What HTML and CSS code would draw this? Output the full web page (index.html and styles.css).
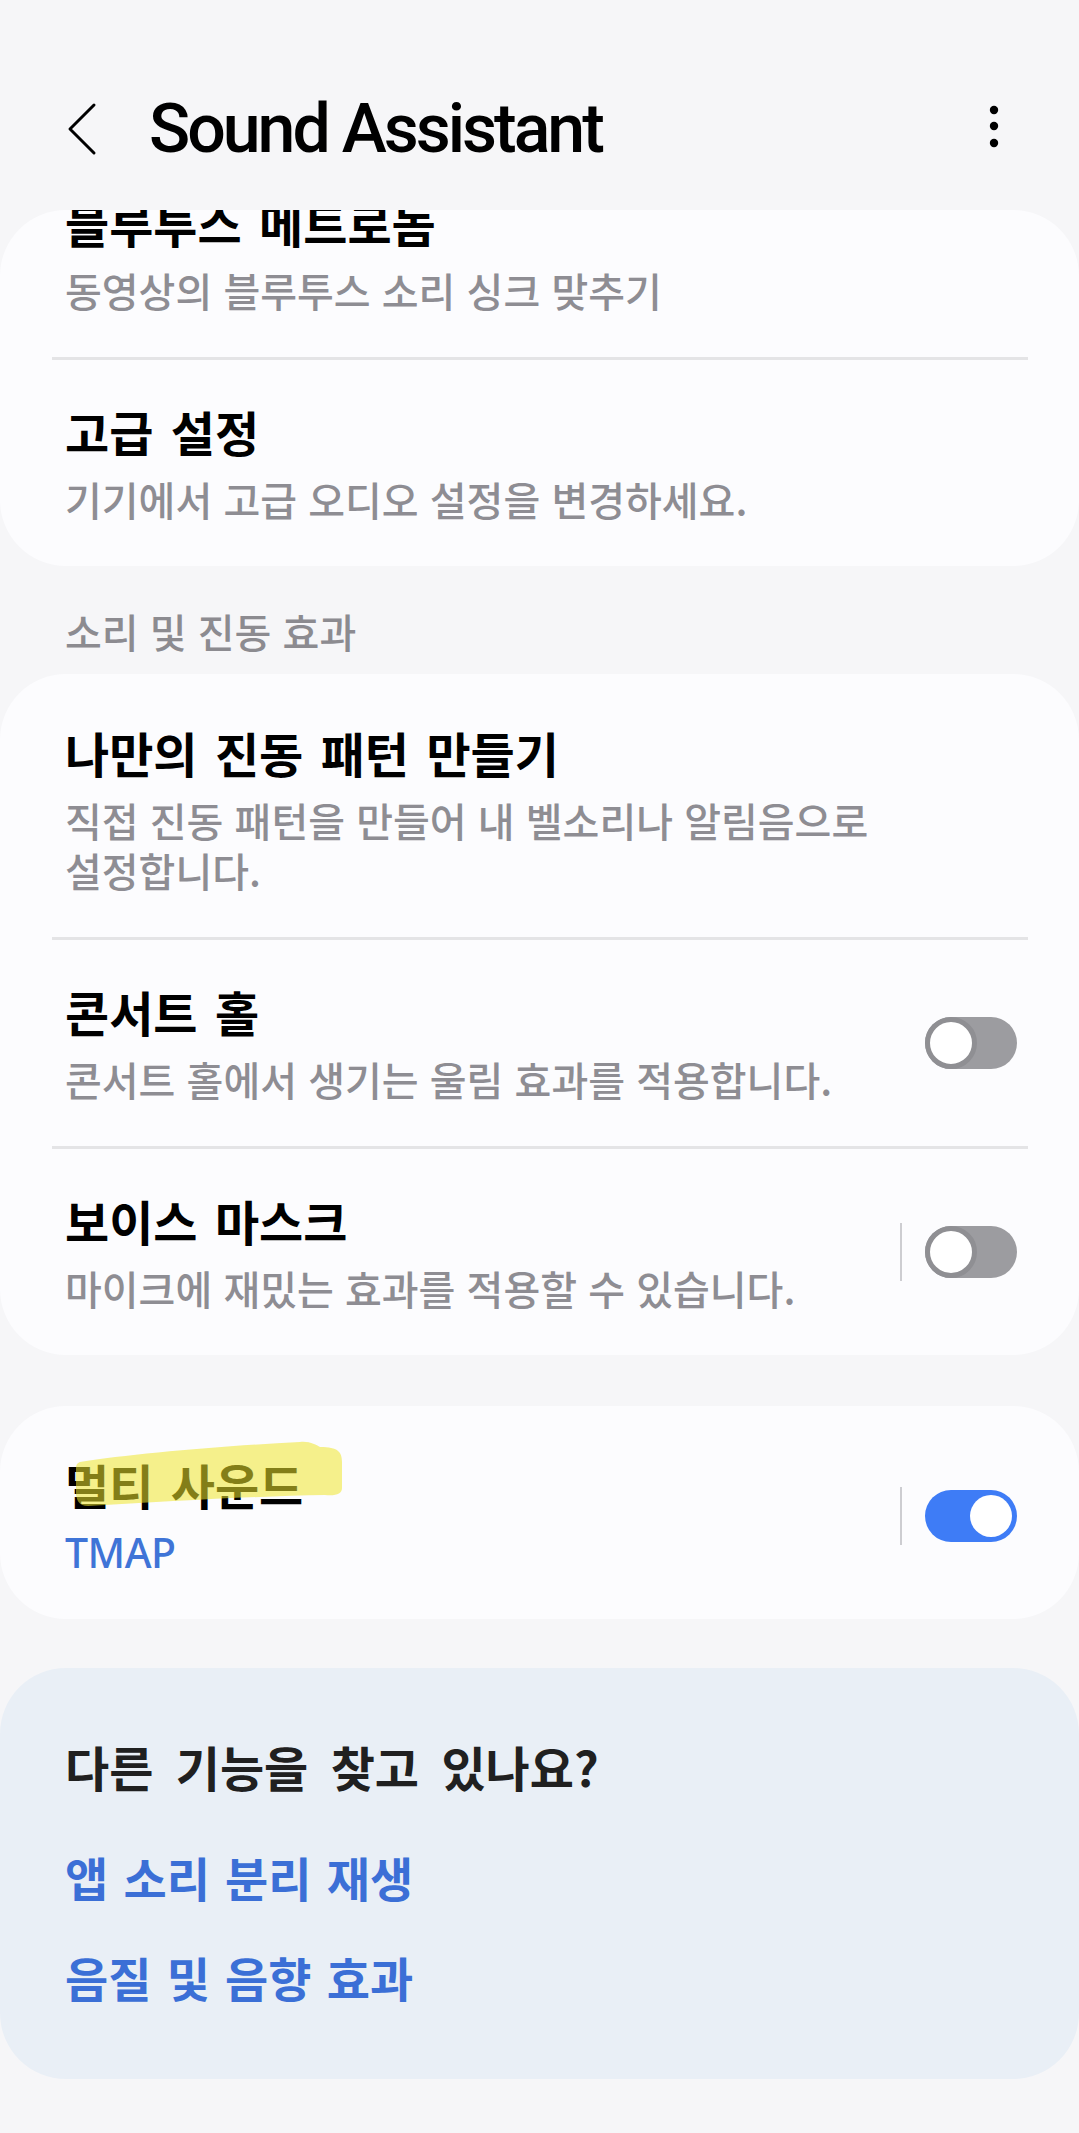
FILE: index.html
```html
<!DOCTYPE html>
<html lang="ko">
<head>
<meta charset="utf-8">
<title>Sound Assistant</title>
<link rel="stylesheet" href="styles.css">
</head>
<body>
<div class="app">
  <header class="appbar">
    <svg class="back" width="30" height="60" viewBox="0 0 30 60"><path d="M27 6 L3 30 L27 54" fill="none" stroke="#000" stroke-width="3" stroke-linecap="round" stroke-linejoin="round"/></svg>
    <h1 class="title">Sound Assistant</h1>
    <svg class="more" width="20" height="60" viewBox="0 0 20 60"><circle cx="10" cy="13" r="4.2" fill="#000"/><circle cx="10" cy="29" r="4.2" fill="#000"/><circle cx="10" cy="46" r="4.2" fill="#000"/></svg>
  </header>

  <main class="scroll">
    <section class="card card-first">
      <div class="row">
        <div class="text">
          <div class="t">블루투스 메트로놈</div>
          <div class="s">동영상의 블루투스 소리 싱크 맞추기</div>
        </div>
      </div>
      <div class="divider"></div>
      <div class="row">
        <div class="text">
          <div class="t">고급 설정</div>
          <div class="s">기기에서 고급 오디오 설정을 변경하세요.</div>
        </div>
      </div>
    </section>

    <div class="section-label">소리 및 진동 효과</div>

    <section class="card">
      <div class="row">
        <div class="text">
          <div class="t">나만의 진동 패턴 만들기</div>
          <div class="s">직접 진동 패턴을 만들어 내 벨소리나 알림음으로 설정합니다.</div>
        </div>
      </div>
      <div class="divider"></div>
      <div class="row">
        <div class="text">
          <div class="t">콘서트 홀</div>
          <div class="s">콘서트 홀에서 생기는 울림 효과를 적용합니다.</div>
        </div>
        <div class="switch off"><span class="thumb"></span></div>
      </div>
      <div class="divider"></div>
      <div class="row">
        <div class="text">
          <div class="t">보이스 마스크</div>
          <div class="s">마이크에 재밌는 효과를 적용할 수 있습니다.</div>
        </div>
        <div class="vsep"></div>
        <div class="switch off"><span class="thumb"></span></div>
      </div>
    </section>

    <section class="card card-multi">
      <div class="row">
        <div class="text">
          <div class="t">멀티 사운드</div>
          <div class="s blue">TMAP</div>
        </div>
        <div class="vsep"></div>
        <div class="switch on"><span class="thumb"></span></div>
      </div>
      <svg class="marker" width="400" height="120" viewBox="0 0 400 120"><path d="M80 50 C130 42 220 34 300 30 C310 29 316 33 320 35 C338 35 342 40 342 50 L342 76 C342 82 336 84 325 83 C260 84 170 89 88 94 C79 94 76 88 76 80 L76 56 C76 53 77 51 80 50 Z" fill="#efe52c" fill-opacity="0.55"/></svg>
    </section>

    <section class="card card-more">
      <div class="more-title">다른 기능을 찾고 있나요?</div>
      <div class="link first">앱 소리 분리 재생</div>
      <div class="link">음질 및 음향 효과</div>
    </section>
  </main>
</div>
</body>
</html>
```

FILE: styles.css
```css
html, body {
  margin: 0;
  padding: 0;
  background: #f6f6f8;
}

body {
  font-family: "Noto Sans CJK KR", "Noto Sans", sans-serif;
  width: 1079px;
  height: 2133px;
  overflow: hidden;
}

.app {
  width: 1079px;
}

.appbar {
  height: 210px;
  box-sizing: border-box;
  padding: 99px 0 0 67px;
  display: flex;
  align-items: flex-start;
}

.back {
  display: block;
  flex: none;
}

.title {
  margin: 0 0 0 52px;
  flex: 1;
  font-family: "Roboto", "Liberation Sans", sans-serif;
  font-weight: 500;
  font-size: 68px;
  line-height: 60px;
  letter-spacing: -3px;
  color: #000;
}

.more {
  display: block;
  flex: none;
  margin-right: 75px;
  margin-top: -2px;
}

.scroll {
  border-radius: 66px 66px 0 0;
  overflow: hidden;
}

.card {
  background: #fcfcfe;
  border-radius: 66px;
  padding-top: 7px;
  position: relative;
}

.card-first {
  margin-top: -66px;
}

.row {
  display: flex;
  align-items: center;
  padding: 41px 62px 42px 65px;
}

.text {
  flex: 1;
  min-width: 0;
}

.t {
  font-size: 48px;
  line-height: 60px;
  font-weight: 700;
  color: #000;
  word-spacing: 4px;
}

.s {
  margin-top: 13px;
  font-size: 40px;
  line-height: 50px;
  font-weight: 500;
  color: #8e8d93;
  word-break: keep-all;
}

.s.blue {
  color: #3f74d7;
  font-size: 41px;
  font-family: "Noto Sans", "Noto Sans CJK KR", sans-serif;
  letter-spacing: -0.5px;
}

.divider {
  height: 3px;
  background: #e4e4e6;
  margin: 0 51px 0 52px;
}

.vsep {
  width: 2px;
  height: 58px;
  background: #cdcdd1;
  margin-right: 23px;
  flex: none;
}

.switch {
  width: 92px;
  height: 52px;
  border-radius: 26px;
  position: relative;
  flex: none;
  margin-left: 24px;
}

.vsep + .switch {
  margin-left: 0;
}

.switch.off {
  background: #9c9ca0;
}

.switch.off .thumb {
  position: absolute;
  left: 0;
  top: 0;
  width: 52px;
  height: 52px;
  box-sizing: border-box;
  border-radius: 50%;
  background: #fff;
  border: 5px solid #8f8f93;
}

.switch.on {
  background: #3e7cf6;
}

.switch.on .thumb {
  position: absolute;
  right: 5px;
  top: 5px;
  width: 42px;
  height: 42px;
  border-radius: 50%;
  background: #fff;
}

.section-label {
  margin: 40px 0 18px;
  padding-left: 65px;
  font-size: 40px;
  line-height: 50px;
  font-weight: 500;
  color: #8c8b90;
}

.card-multi {
  margin-top: 51px;
}

.marker {
  position: absolute;
  left: 0;
  top: 6px;
  pointer-events: none;
}

.card-more {
  margin-top: 49px;
  background: #e9eff6;
  padding: 68px 65px 72px;
}

.more-title {
  font-size: 48px;
  line-height: 60px;
  font-weight: 700;
  color: #202020;
  word-spacing: 9px;
}

.link {
  font-size: 47px;
  line-height: 60px;
  font-weight: 700;
  color: #3b6fd6;
  margin-top: 40px;
  word-spacing: 2px;
}

.link.first {
  margin-top: 51px;
}
```
